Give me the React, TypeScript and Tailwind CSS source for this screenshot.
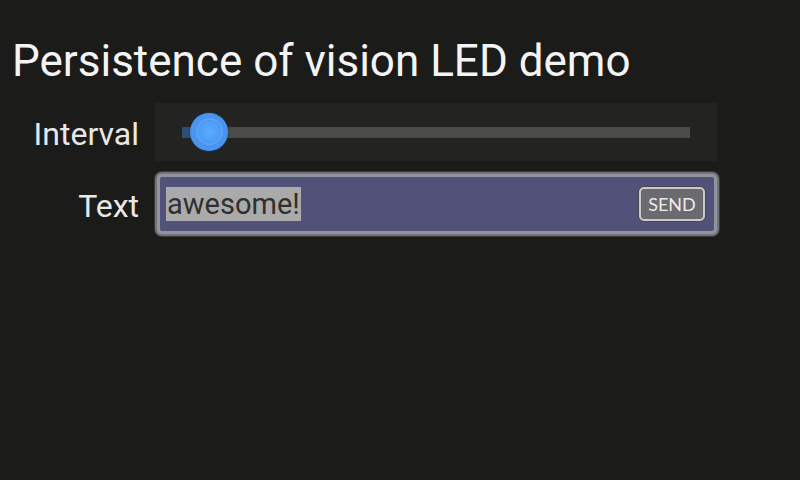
import { useState } from "react";

const App = () => {
  const [text, setText] = useState("awesome!");

  return (
    <div className="w-[800px] h-[480px] bg-[#1b1c1a] overflow-hidden" style={{ fontFamily: "Roboto, sans-serif" }}>
      {/* title */}
      <h1 className="pl-[12px] pt-[36px] h-[103px] text-[44px] leading-[50px] text-[#f4f4f4] font-normal">
        Persistence of vision LED demo
      </h1>
      <div className="flex flex-col gap-[11px]">
        {/* interval slider */}
        <div className="flex items-center">
          <span className="w-[140px] pr-[1px] pt-[3px] text-right text-[32px] leading-[40px] text-[#e8e8e8]">Interval</span>
          <div className="ml-[15px] w-[562px] h-[58px] bg-[#232422] flex items-center px-[27px]">
            <div className="relative w-full h-[11px] bg-[#4b4c4a]">
              <div className="h-full w-[22px] bg-[#2e4e73]" />
              <div className="absolute left-[8px] top-[-14px] w-[38px] h-[38px] rounded-full bg-[#4a93ef] flex items-center justify-center shadow-[0_0_2px_#1e3a60]">
                <div className="w-[27px] h-[27px] rounded-full bg-[radial-gradient(circle,#5aaaff_0%,#4e9ef7_60%,#3e86de_100%)] border-[2px] border-[#5aa4f7]" />
              </div>
            </div>
          </div>
        </div>
        {/* text input */}
        <div className="flex items-center">
          <span className="w-[140px] pr-[1px] pt-[3px] text-right text-[32px] leading-[40px] text-[#e8e8e8]">Text</span>
          <div className="ml-[15px] w-[564px] h-[64px] rounded-[7px] bg-[#737479] p-[2px] shadow-[0_0_0_1px_#3a3b3c]">
            <div className="w-full h-full rounded-[5px] border-[3px] border-[#8f949e] bg-[#525179] flex items-center pl-[6px] pr-[8px]">
              <span className="bg-[#aaaaaa] text-[#303030] text-[29px] leading-[34px] px-[1px]">{text}</span>
              <input className="hidden" value={text} onChange={(e: any) => setText(e.target.value)} />
              <button className="ml-auto w-[68px] h-[36px] rounded-[6px] bg-[#4a4a52] p-[1px]">
                <div className="w-full h-full rounded-[5px] border-[2px] border-[#c9c9cc] bg-[#6b6a6f] flex items-center justify-center text-[18px] text-[#ececec]" style={{ fontFamily: "Lato, sans-serif" }}>
                  SEND
                </div>
              </button>
            </div>
          </div>
        </div>
      </div>
    </div>
  );
};

export default App;
